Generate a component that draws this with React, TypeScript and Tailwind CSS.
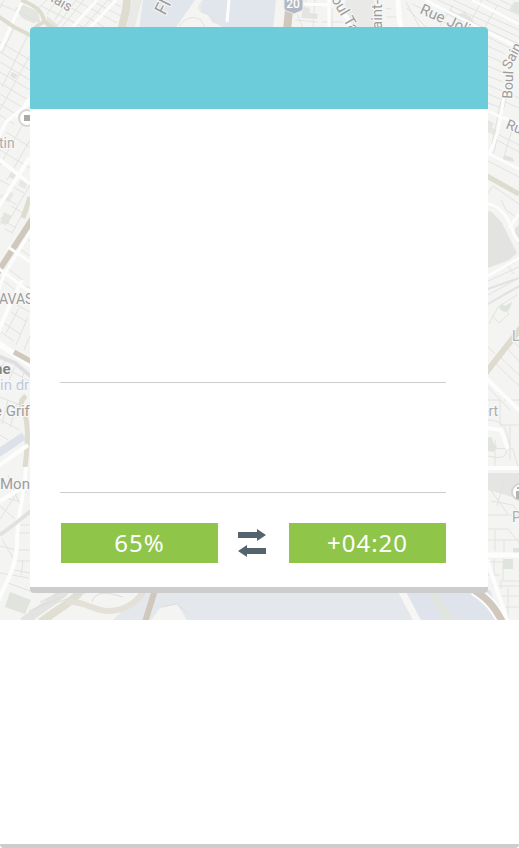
import React from "react";

type Street = { d: string; w: number; c?: string };

const WHITE = "#fdfdfd";
const TAN = "#dedbcf";
const BROWN = "#d0c7bd";
const GREY = "#e3e3e1";
const WATER = "#e1e5ec";

const areas: [string, string][] = [
  ["M15 8 L24 5 L38 12 L40 21 L33 23 L22 18Z", "#e2e5e0"],
  ["M47 16 L58 25 L58 29 L46 27Z", "#e2e5e0"],
  ["M132 0 H142 L134 30 H126Z", "#e9e9e8"],
  ["M143 0 H195 L174 30 H139Z", WATER],
  ["M203 0 H276 L273 30 H228 L219 25 L212 22 L208 15 L201 12 L200 7Z", WATER],
  ["M303 8 L309 7 L310 13 L318 14 L317 19 L301 18Z", "#e2e5e0"],
  ["M346 0 H374 V30 H354 L344 9Z", "#e9e9e7"],
  ["M444 12 L451 10 L458 14 L464 13 L471 17 L475 24 L466 22 L458 21Z", "#e1e5df"],
  ["M509 10 L514 2 H519 V14Z", "#e1e5df"],
  ["M12 171 L18 175 L15 180 L9 177Z", "#e5e4e1"],
  ["M7 190 L14 194 L9 202 L0 198Z", "#e9e8e5"],
  ["M22 177 L29 180 L25 189 L18 185Z", "#e9e8e5"],
  ["M4 212 L12 216 L6 225 L0 223Z", "#e5e4e1"],
  ["M12 72 L18 75 L15 79 L10 76Z", "#e2e2e0"],
  ["M488 120 L494 123 L492 128 L498 130 L496 136 L488 132Z", "#e6e7e4"],
  ["M504 155 L513 158 L514 162 L503 159Z", "#dfe3dd"],
  ["M488 211 L492 212 L502 223 L517 253 L509 260 L488 268Z", "#e3e3e1"],
  ["M515 228 L519 225 V239 L514 234Z", "#e3e3e1"],
  ["M499 308 L502 304 L505 306 L512 302 L510 308 L507 312 L502 311Z", "#dfe3dd"],
  ["M488 437 L492 438 L493 443 L497 446 L494 452 L488 451Z", "#dfe4dd"],
  ["M488 473 H519 V499 L499 493 L488 490Z", "#e5e5e3"],
  ["M503 559 H513 V569 H503Z M513 548 H519 V553 H513Z", "#e0e4de"],
  ["M10 592 L31 600 L25 614 L5 607Z", "#e0e4dc"],
  ["M113 620 L142 590 H488 L505 620Z", "#e4e7eb"],
  ["M401 590 H490 L502 620 H416Z", "#dfe3eb"],
  ["M151 620 L160 608 L177 604 L187 620Z", "#f4f4f2"],
  ["M427 590 H436 L454 620 H443Z", "#e0e5e0"],
];

const streets: Street[] = [
  { d: "M22 2 L0 50", w: 3 },
  { d: "M97 0 L70 30 M116 0 L88 30", w: 3 },
  { d: "M-2 16 L14 27 L32 36", w: 4, c: TAN },
  { d: "M21 0 C34 5 41 10 43 17 C44 23 50 26 57 30 M44 22 C37 25 34 28 32 35", w: 4, c: TAN },
  { d: "M127 -1 C127 14 122 21 122 30", w: 8, c: TAN },
  { d: "M229 0 L227 22", w: 3 },
  { d: "M290 0 L287 30", w: 8, c: BROWN },
  { d: "M329 0 V30 M300 4 L329 5", w: 3 },
  { d: "M342 0 C338 6 340 12 347 17 L351 30", w: 4 },
  { d: "M398 0 C399 12 398 19 402 30", w: 5 },
  { d: "M425 0 L519 48", w: 3 },
  { d: "M472 0 L519 24", w: 3 },
  { d: "M30 102 L6 122 L-2 139", w: 3 },
  { d: "M30 157 L-4 211 M30 98 L17 118 M30 184 L0 160", w: 4 },
  { d: "M30 197 L23 218", w: 5, c: TAN },
  { d: "M33 218 L-4 275", w: 6, c: BROWN },
  { d: "M30 232 L4 275 L-2 292 M8 247 L32 263 M-3 267 L30 292", w: 3 },
  { d: "M22 280 L8 309 L-4 337", w: 4 },
  { d: "M-4 342 L33 366", w: 6 },
  { d: "M14 352 L32 362", w: 5, c: BROWN },
  { d: "M-5 355 L15 363 L34 379", w: 4, c: "#dfdfe1" },
  { d: "M26 396 C20 400 20 405 24 412 C29 424 28 444 25 467", w: 5, c: TAN },
  { d: "M-3 454 L24 436", w: 8, c: "#dce1ea" },
  { d: "M-3 467 L28 445 M-3 503 L30 483", w: 4 },
  { d: "M26 467 C25 494 17 514 17 543 C16 570 6 581 -3 604", w: 4 },
  { d: "M32 510 L16 523 L0 535", w: 4, c: "#e0e1e1" },
  { d: "M505 90 C501 112 500 135 488 155 M488 153 L519 169 M488 111 L501 117 L519 124", w: 3 },
  { d: "M485 175 L519 194", w: 5, c: TAN },
  { d: "M488 204 C503 207 509 220 514 234 L519 242 M488 276 L519 258 M519 214 L509 228", w: 3 },
  { d: "M485 290 L519 278 M488 304 L519 286", w: 2, c: "#e0e2e4" },
  { d: "M524 324 L485 374", w: 6, c: TAN },
  { d: "M485 377 L522 413 M488 428 L501 430 L508 449 M488 468 H519", w: 4 },
  { d: "M485 555 H522", w: 5 },
  { d: "M487 560 L508 623", w: 4 },
  { d: "M474 590 C488 599 495 607 503 623", w: 11 },
  { d: "M474 590 C488 599 495 607 503 623", w: 7, c: BROWN },
  { d: "M401 590 L418 622", w: 7, c: "#f6f6f5" },
  { d: "M155 590 L145 622", w: 6, c: BROWN },
  { d: "M23 622 C42 608 55 600 66 590", w: 9, c: GREY },
  { d: "M41 622 C62 606 70 604 80 592", w: 8, c: "#e1dfd4" },
  { d: "M66 602 C83 600 94 611 108 611 C123 611 137 603 143 592", w: 6, c: "#e4e2d8" },
];

const thinLines =
  "M0 4 L54 28 M4 0 L0 8 M47 0 L36 10 M57 0 L47 14 M67 0 L55 20 M76 0 L57 26 M41 6 L85 28 M63 3 L106 28 M75 0 L117 23 M92 1 L123 17 M109 0 L121 7 M84 0 L61 28 M108 0 L83 28 " +
  "M15 26 L2 53 M0 42 L30 60 M0 52 L30 70 M0 62 L30 80 M0 72 L30 90 M0 83 L30 101 M0 94 L27 110 M0 104 L20 117 M0 115 L14 124 M28 35 L2 87 M30 55 L0 110 " +
  "M0 150 L30 168 M6 132 L30 147 M22 126 L0 165 M30 140 L7 180 M0 180 L24 193 M0 195 L17 205 M30 185 L7 224 M0 218 L16 228 M11 206 L23 213 L12 233 M22 180 L30 186 M5 229 L13 233 M23 236 L30 241 M17 247 L30 256 M6 267 L23 280 M0 278 L15 290 " +
  "M24 286 L30 288 M15 304 L30 312 M11 312 L27 322 M4 323 L20 334 M1 332 L14 341 M28 317 L16 345 M19 308 L6 333 M30 336 L24 350 " +
  "M0 365 L29 381 M5 361 L0 370 M15 366 L9 380 M24 373 L18 388 M0 397 L20 405 M0 420 L20 430 M8 400 L2 424 M17 403 L10 427 M0 435 L8 440 " +
  "M0 480 L27 493 M8 475 L22 510 M0 506 L15 519 M5 498 L23 502 M17 493 L0 519 M19 525 H30 M18 533 H30 M0 546 L17 550 M18 550 H30 M17 561 H30 M2 539 L15 561 M0 573 L29 578 M14 570 L30 573 M8 583 L30 591 M23 561 L21 575 " +
  "M203 0 C195 10 199 12 211 15 C216 22 219 24 226 28 M179 26 C185 18 192 15 201 20 L205 28 M295 20 L318 22 M297 14 L303 28 M306 0 L304 8 M315 0 L313 28 M300 5 L322 6 M332 8 V28 M322 22 H343 " +
  "M386 8 L391 9 M387 17 H396 M406 2 L420 28 M407 8 L427 28 M412 4 L425 10 L453 28 M425 0 L519 44 M438 0 L519 37 M453 0 L519 30 M471 0 L519 22 M486 0 L519 15 M500 0 L519 9 M465 11 L457 28 M453 5 L440 26 M497 6 L485 27 M482 0 L472 19 " +
  "M488 37 L519 53 M488 46 L505 54 M488 56 L504 63 M488 66 L504 73 M488 76 L503 82 M488 85 L502 91 M488 94 L500 99 M488 103 L504 109 M503 91 L492 144 M515 96 L519 98 M503 101 L519 108 M509 85 L504 108 M495 139 L519 152 M500 124 L494 153 M499 135 L519 145 M491 153 L519 168 M512 130 L504 157 " +
  "M488 161 L519 177 M488 193 L493 186 L519 204 M501 200 L506 210 L517 218 M488 205 C508 211 510 227 519 244 M488 275 L515 262 M488 281 L519 267 M506 264 L514 274 " +
  "M488 295 L519 278 M488 304 L519 287 M489 324 L498 307 L517 295 M492 315 L499 323 L509 314 L503 308 M488 347 L495 354 M504 345 L519 361 M498 355 L519 375 M494 362 L519 386 M511 339 L519 347 M488 387 L510 410 M504 400 H519 M488 400 H500 V425 H519 M488 420 C504 421 507 427 510 449 M488 456 C503 459 507 458 507 445 M510 425 V460 " +
  "M488 448 L513 449 L519 470 M495 440 V470 M490 489 L508 514 M488 515 H519 M491 501 L513 505 L519 513 M504 481 L497 506 M488 529 H508 L519 543 M488 540 H519 M495 530 V551 M504 540 V553 M488 562 H503 V581 H519 M488 575 H500 M494 559 V575 M492 586 H519 M508 588 V620 M499 596 H519 M506 607 H519 M501 580 V589";

const labels: { t: string; x: number; y: number; r?: number; s: number; c?: string; b?: boolean }[] = [
  { t: "lais", x: 50, y: 1, r: 30, s: 14 },
  { t: "Fl", x: 165, y: 16, r: -63, s: 18 },
  { t: "oul Ta", x: 331, y: -1, r: 60, s: 15 },
  { t: "aint-I", x: 382, y: 29, r: -90, s: 15 },
  { t: "Rue Joli", x: 419, y: 13, r: 24, s: 15 },
  { t: "Boul", x: 512, y: 99, r: -87, s: 14 },
  { t: "Sain", x: 510, y: 70, r: -63, s: 14 },
  { t: "Ru", x: 505, y: 128, r: 22, s: 14 },
  { t: "tin", x: -1, y: 148, s: 14, c: "#adadad" },
  { t: "AVAS", x: -1, y: 304, s: 14 },
  { t: "ne", x: -6, y: 374, s: 15, c: "#858585", b: true },
  { t: "in dr", x: 0, y: 390, s: 15, c: "#bfc9dc" },
  { t: "e Grif", x: -6, y: 416, s: 15 },
  { t: "Mon", x: 0, y: 489, s: 15 },
  { t: "L", x: 512, y: 341, s: 14, c: "#b0b0b0" },
  { t: "ert", x: 481, y: 416, s: 14, c: "#adadad" },
  { t: "P", x: 512, y: 522, s: 14, c: "#adadad" },
];

function CityMap() {
  return (
    <svg
      className="absolute inset-0 h-full w-full"
      viewBox="0 0 519 620"
      preserveAspectRatio="xMidYMid slice"
      aria-hidden="true"
    >
      <rect width="519" height="620" fill="#f4f4f2" />
      {areas.map(([d, fill]) => (
        <path key={d} d={d} fill={fill} />
      ))}
      <path d={thinLines} fill="none" stroke="#e2e2df" strokeWidth="1" />
      {streets.map((s, i) => (
        <path key={i} d={s.d} fill="none" stroke={s.c ?? WHITE} strokeWidth={s.w} />
      ))}
      <path
        d="M40 602 L61 592 M55 603 L91 591 M65 600 L78 592 M29 611 L67 595 M92 602 C95 592 106 591 122 597 M188 613 L177 604 L161 607"
        fill="none"
        stroke="#dddeda"
        strokeWidth="1"
      />
      <path d="M284 -2 H303 V7 C303 12 299 11 294 14 C289 11 284 12 284 7Z" fill="#b1b8c4" stroke="#e9ebed" />
      <text x="293" y="8" textAnchor="middle" fontFamily="Roboto, sans-serif" fontWeight="500" fontSize="12" fill="#ffffff">
        20
      </text>
      <circle cx="27" cy="118" r="8" fill="#ffffff" stroke="#d5d5d3" strokeWidth="2" />
      <rect x="24" y="115" width="6" height="6" fill="#aaa9a6" />
      <circle cx="520" cy="492" r="8" fill="#ffffff" stroke="#d4d4d2" strokeWidth="2" />
      <path d="M517 487 H519 V489 H517Z M516 491 H519 V499 H516Z" fill="#b5b5af" />
      {labels.map((l) => (
        <text
          key={l.t}
          transform={`translate(${l.x} ${l.y}) rotate(${l.r ?? 0})`}
          fontFamily="Roboto, sans-serif"
          fontSize={l.s}
          fontWeight={l.b ? 700 : 400}
          fill={l.c ?? "#9c9c9c"}
          stroke="#f8f8f7"
          strokeWidth="2"
          paintOrder="stroke"
        >
          {l.t}
        </text>
      ))}
    </svg>
  );
}

function SwapIcon() {
  return (
    <svg width="28" height="30" viewBox="0 0 28 30" fill="#53646f" aria-hidden="true">
      <path d="M0 4 H19 V1 L28 7 L19 13 V10 H0Z" />
      <path d="M28 26 H9 V29 L0 23 L9 17 V20 H28Z" />
    </svg>
  );
}

const valueButton =
  "h-10 flex-1 bg-[#8fc549] text-center text-2xl leading-10 tracking-[1px] text-white";

export default function App() {
  return (
    <div className="min-h-screen rounded-b-[4px] border-b-4 border-[#cdcdcd] bg-white font-['Noto_Sans',sans-serif]">
      <section className="relative overflow-hidden pt-[27px] pr-[31px] pb-[27px] pl-[30px]">
        <CityMap />
        <main className="relative overflow-hidden rounded-[4px] border-b-6 border-[#cdcdcd] bg-white">
          <header className="h-[82px] bg-[#6cccda]" />
          <div className="mr-[42px] ml-[30px]">
            <div className="h-[274px] border-b border-[#cdcdcd]" />
            <div className="h-[110px] border-b border-[#cdcdcd]" />
            <div className="flex items-center pt-[30px] pb-6 pl-px">
              <button type="button" className={valueButton}>
                65%
              </button>
              <button type="button" aria-label="Swap" className="mr-[23px] ml-5 shrink-0">
                <SwapIcon />
              </button>
              <button type="button" className={valueButton}>
                +04:20
              </button>
            </div>
          </div>
        </main>
      </section>
    </div>
  );
}
